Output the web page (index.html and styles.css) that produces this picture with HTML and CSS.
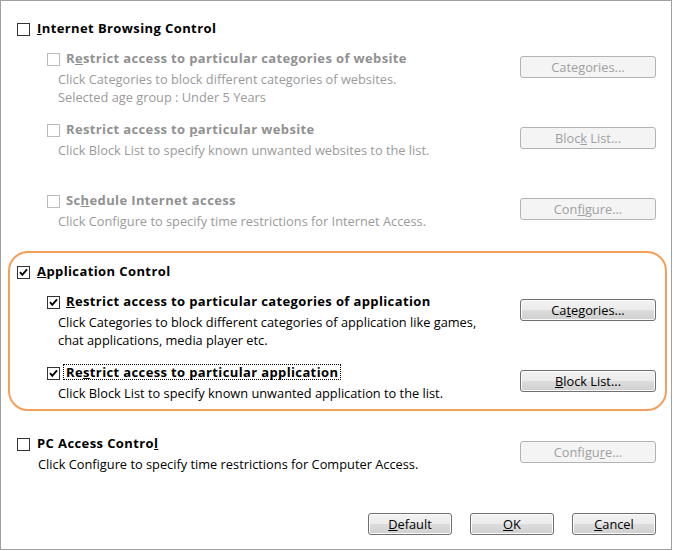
FILE: index.html
```html
<!DOCTYPE html>
<html>
<head>
<meta charset="utf-8">
<link rel="stylesheet" href="styles.css">
</head>
<body>
<div class="window">
  <section class="group first">
    <div class="head"><span class="cb"></span><span class="label"><u>I</u>nternet Browsing Control</span></div>
    <div class="items">
      <div class="item off">
        <div class="main">
          <div class="title"><span class="cb dis"></span><span>R<u>e</u>strict access to particular categories of website</span></div>
          <div class="desc">Click Categories to block different categories of websites.<br>Selected age group : Under 5 Years</div>
        </div>
        <button class="btn" disabled>Categories...</button>
      </div>
      <div class="item off">
        <div class="main">
          <div class="title"><span class="cb dis"></span><span>Restrict access to <u>p</u>articular website</span></div>
          <div class="desc">Click Block List to specify known unwanted websites to the list.</div>
        </div>
        <button class="btn" disabled>Bloc<u>k</u> List...</button>
      </div>
      <div class="item off">
        <div class="main">
          <div class="title"><span class="cb dis"></span><span>Sc<u>h</u>edule Internet access</span></div>
          <div class="desc">Click Configure to specify time restrictions for Internet Access.</div>
        </div>
        <button class="btn" disabled>Con<u>f</u>igure...</button>
      </div>
    </div>
  </section>

  <section class="group framed">
    <div class="head"><span class="cb on"><svg viewBox="0 0 11 11" width="11" height="11"><path d="M2 5.2 L4.3 7.8 L9 2.4" fill="none" stroke="#000" stroke-width="1.9"/></svg></span><span class="label"><u>A</u>pplication Control</span></div>
    <div class="items">
      <div class="item">
        <div class="main">
          <div class="title"><span class="cb on"><svg viewBox="0 0 11 11" width="11" height="11"><path d="M2 5.2 L4.3 7.8 L9 2.4" fill="none" stroke="#000" stroke-width="1.9"/></svg></span><span><u>R</u>estrict access to particular categories of application</span></div>
          <div class="desc">Click Categories to block different categories of application like games,<br>chat applications, media player etc.</div>
        </div>
        <button class="btn">Ca<u>t</u>egories...</button>
      </div>
      <div class="item">
        <div class="main">
          <div class="title"><span class="cb on"><svg viewBox="0 0 11 11" width="11" height="11"><path d="M2 5.2 L4.3 7.8 L9 2.4" fill="none" stroke="#000" stroke-width="1.9"/></svg></span><span class="focus">Re<u>s</u>trict access to particular application</span></div>
          <div class="desc">Click Block List to specify known unwanted application to the list.</div>
        </div>
        <button class="btn"><u>B</u>lock List...</button>
      </div>
    </div>
  </section>

  <section class="group pc">
    <div class="item">
      <div class="main">
        <div class="head"><span class="cb"></span><span class="label">PC Access Contro<u>l</u></span></div>
        <div class="desc pcdesc">Click Configure to specify time restrictions for Computer Access.</div>
      </div>
      <button class="btn" disabled>Configu<u>r</u>e...</button>
    </div>
  </section>

  <div class="footer">
    <button class="btn small"><u>D</u>efault</button>
    <button class="btn small"><u>O</u>K</button>
    <button class="btn small"><u>C</u>ancel</button>
  </div>
</div>
</body>
</html>
```
FILE: styles.css
```css
* { box-sizing: border-box; }

body {
  margin: 0;
  font-family: "Open Sans", "Noto Sans", sans-serif;
  font-size: 12.8px;
  color: #000;
  background: #fff;
}

.window {
  width: 672px;
  height: 550px;
  border: 1px solid #a0a0a0;
  display: flex;
  flex-direction: column;
}

.group {
  padding: 18px 15px 0 16px;
}

.head {
  display: flex;
  align-items: flex-start;
  height: 18px;
  line-height: 18px;
  font-size: 13px;
  font-weight: bold;
  letter-spacing: 0.4px;
}

.cb {
  flex: none;
  width: 13px;
  height: 13px;
  margin-top: 4px;
  margin-right: 7px;
  border: 1px solid #333;
  background: #fff;
  display: flex;
  align-items: center;
  justify-content: center;
}

.cb.dis {
  border-color: #bcbcbc;
}

.items {
  margin-top: 12px;
}

.item {
  display: grid;
  grid-template-columns: 1fr 136px;
  min-height: 71px;
}

.item:last-child {
  min-height: 0;
}

.title {
  display: flex;
  align-items: flex-start;
  height: 18px;
  line-height: 18px;
  padding-left: 30px;
  font-size: 13px;
  font-weight: bold;
  letter-spacing: 0.37px;
}

.title .cb {
  margin-right: 6px;
}

.desc {
  margin-top: 3px;
  padding-left: 41px;
  line-height: 18px;
}

.off .desc {
  color: #9a9a9a;
}

.off .title {
  color: #919191;
}

.focus {
  display: inline-block;
  margin-left: -3px;
  margin-top: 1px;
  padding: 0 2px;
  line-height: 14px;
  border: 1px dotted #000;
}

.framed {
  margin: 21px 4px 0 7px;
  padding: 9px 9px 7px 7px;
  border: 2px solid #f5a05a;
  border-radius: 20px;
}

.pc {
  margin-top: 23px;
  padding-top: 0;
}

.pcdesc {
  padding-left: 21px;
}

.btn {
  height: 22px;
  margin-top: 7px;
  padding: 0;
  font-family: inherit;
  font-size: 12.8px;
  color: #000;
  border: 1px solid #707070;
  border-radius: 3px;
  background: linear-gradient(#f2f2f2 0%, #ebebeb 50%, #dddddd 50%, #cfcfcf 100%);
  box-shadow: inset 0 0 0 1px #fbfbfb;
  text-align: center;
  line-height: 18px;
}

.btn:disabled {
  color: #a0a0a0;
  border-color: #b3b3b3;
  background: #f4f4f4;
  box-shadow: none;
}

.footer {
  margin-top: auto;
  display: flex;
  justify-content: flex-end;
  gap: 18px;
  padding: 0 15px 14px;
}

.btn.small {
  width: 84px;
  margin-top: 0;
}
```
